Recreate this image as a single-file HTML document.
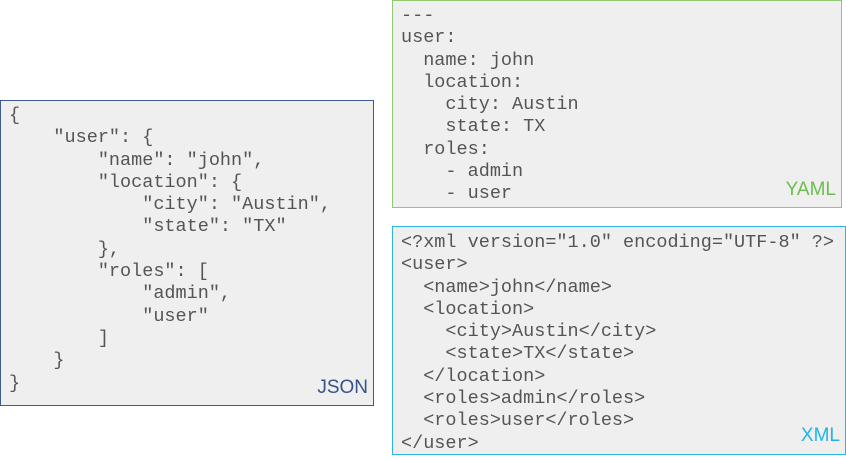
<!DOCTYPE html>
<html><head><meta charset="utf-8"><style>
body{margin:0;width:846px;height:459px;background:#fff;position:relative;overflow:hidden}
.b{position:absolute;box-sizing:border-box;background:#efefef}
pre{margin:0;font-family:"Liberation Mono",monospace;font-size:18.5px;line-height:22.3px;color:#555;position:absolute;left:8px}
.l{position:absolute;font-family:"Liberation Sans",Arial,sans-serif;font-size:19px;right:5px}
</style></head><body>
<div class="b" style="left:0;top:100px;width:374px;height:306px;border:1.5px solid #3f5c8c">
<pre style="top:4px">{
    "user": {
        "name": "john",
        "location": {
            "city": "Austin",
            "state": "TX"
        },
        "roles": [
            "admin",
            "user"
        ]
    }
}</pre>
<div class="l" style="bottom:6px;color:#34558a">JSON</div>
</div>
<div class="b" style="left:392px;top:0;width:450px;height:208px;border:1.5px solid #8fca73">
<pre style="top:4px">---
user:
  name: john
  location:
    city: Austin
    state: TX
  roles:
    - admin
    - user</pre>
<div class="l" style="bottom:6px;color:#6cbf4c">YAML</div>
</div>
<div class="b" style="left:392px;top:226px;width:454px;height:229px;border:1.5px solid #2db6e2">
<pre style="top:5px">&lt;?xml version="1.0" encoding="UTF-8" ?&gt;
&lt;user&gt;
  &lt;name&gt;john&lt;/name&gt;
  &lt;location&gt;
    &lt;city&gt;Austin&lt;/city&gt;
    &lt;state&gt;TX&lt;/state&gt;
  &lt;/location&gt;
  &lt;roles&gt;admin&lt;/roles&gt;
  &lt;roles&gt;user&lt;/roles&gt;
&lt;/user&gt;</pre>
<div class="l" style="bottom:7px;color:#22b4e6">XML</div>
</div>
</body></html>
